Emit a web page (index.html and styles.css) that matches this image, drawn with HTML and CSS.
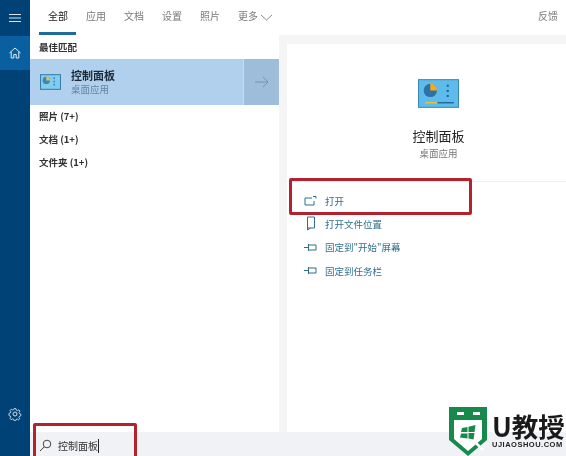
FILE: index.html
```html
<!DOCTYPE html>
<html lang="zh-CN">
<head>
  <meta charset="UTF-8" />
  <title>控制面板</title>
  <link rel="stylesheet" href="styles.css">
</head>
<body>
  <div class="screen">
    <!-- Sidebar -->
    <aside class="sidebar">
      <div class="side-btn">
        <svg width="14" height="10" viewBox="0 0 14 10"><path d="M1 1.500h12M1 5h12M1 8.500h12" stroke="#d5e3ee" fill="none"/></svg>
      </div>
      <div class="side-btn side-home">
        <svg width="14" height="14" viewBox="0 0 14 14"><path d="M1.500 7 7 2l5.500 5M3.200 5.800V12h2.600V8.500h2.400V12h2.600V5.800" stroke="#e3eef6" fill="none"/></svg>
      </div>
      <div class="side-gear">
        <svg width="14" height="14" viewBox="0 0 14 14"><path d="M6 1.200h2l.4 1.700 1.300.6 1.500-.9 1.300 1.500-1 1.400.4 1.300 1.600.6v1.800l-1.600.6-.5 1.300.9 1.300-1.400 1.300-1.400-.9-1.300.5-.4 1.400H6l-.4-1.500-1.300-.5-1.500.9-1.300-1.400.9-1.400-.5-1.200-1.600-.6V6.600l1.600-.6.5-1.300-1-1.400 1.400-1.400 1.500.9 1.300-.5z" stroke="#d5e3ee" fill="none" transform="translate(.7 .5) scale(.9)"/><circle cx="7" cy="7" r="2" stroke="#d5e3ee" fill="none"/></svg>
      </div>
    </aside>

    <main class="main">
      <!-- Tabs -->
      <nav class="tabs">
        <span class="tab tab-active">全部</span>
        <span class="tab">应用</span>
        <span class="tab">文档</span>
        <span class="tab">设置</span>
        <span class="tab">照片</span>
        <span class="tab">更多
          <svg class="chevron" width="13" height="7" viewBox="0 0 13 7"><path d="M1 1l5.500 5L12 1" stroke="#8a8a8a" fill="none"/></svg>
        </span>
        <span class="feedback">反馈</span>
      </nav>

      <div class="content">
        <!-- Results -->
        <section class="results">
          <h2 class="best">最佳匹配</h2>
          <div class="best-row">
            <div class="best-info">
              <svg width="21" height="16" viewBox="0 0 40 30">
                <rect x="1" y="1" width="38" height="28" fill="#7fcdf0" stroke="#3b7fa8" stroke-width="2"/>
                <circle cx="12" cy="12" r="7" fill="#3f86b8"/>
                <path d="M12 12V5a7 7 0 0 1 7 7z" fill="#f0c040"/>
                <path d="M26 8h2M26 14h2M26 20h2" stroke="#1d5f8e" stroke-width="3"/>
              </svg>
              <div>
                <div class="best-title">控制面板</div>
                <div class="best-sub">桌面应用</div>
              </div>
            </div>
            <div class="best-arrow">
              <svg width="14" height="12" viewBox="0 0 14 12"><path d="M0 6h13M8 1l5 5-5 5" stroke="#6f8ba6" stroke-width=".8" fill="none"/></svg>
            </div>
          </div>
          <div class="group">照片 (7+)</div>
          <div class="group">文档 (1+)</div>
          <div class="group">文件夹 (1+)</div>
        </section>

        <!-- Detail panel -->
        <section class="detail-pane">
          <div class="detail">
            <div class="detail-head">
              <svg width="41" height="29" viewBox="0 0 40 28">
                <rect x="0.500" y="0.500" width="39" height="27" fill="#5dbcec" stroke="#3d86b0"/>
                <circle cx="12" cy="11" r="6.500" fill="#2c72a8"/>
                <path d="M12 11V4a7 7 0 0 1 6.500 7z" fill="#f4ac18"/>
                <path d="M28 6.500h2M28 11.500h2M28 16.500h2" stroke="#1d5f8e" stroke-width="2"/>
                <path d="M7 23h12" stroke="#e8c040" stroke-width="1.500"/>
                <path d="M19 23h16" stroke="#1d6fa0" stroke-width="1.500"/>
              </svg>
              <div class="detail-title">控制面板</div>
              <div class="detail-sub">桌面应用</div>
            </div>
            <ul class="actions">
              <li class="action">
                <svg width="13" height="11" viewBox="0 0 13 11"><path d="M8 3H1v7h9V6M9 1.500h3v2" stroke="#2f6f8c" fill="none"/></svg>
                打开
              </li>
              <li class="action">
                <svg width="13" height="15" viewBox="0 0 13 15"><path d="M3.500 1h7v11h-7zM3.500 1v13l3-2" stroke="#2f6f8c" fill="none"/></svg>
                打开文件位置
              </li>
              <li class="action">
                <svg width="13" height="9" viewBox="0 0 13 9"><path d="M0 4.500h4M4.500 1v7M4.500 2h7.500v5H4.500" stroke="#2f6f8c" fill="none"/></svg>
                固定到"开始"屏幕
              </li>
              <li class="action">
                <svg width="13" height="9" viewBox="0 0 13 9"><path d="M0 4.500h4M4.500 1v7M4.500 2h7.500v5H4.500" stroke="#2f6f8c" fill="none"/></svg>
                固定到任务栏
              </li>
            </ul>
          </div>
        </section>
      </div>

      <!-- Search box -->
      <div class="search">
        <svg width="13" height="13" viewBox="0 0 13 13"><circle cx="8" cy="5" r="3.800" stroke="#444" fill="none"/><path d="M5.300 7.800 1 12" stroke="#444" fill="none"/></svg>
        <span class="search-text">控制面板</span><span class="caret"></span>
      </div>
    </main>

    <!-- Red highlight boxes drawn over the screenshot -->
    <div class="mark mark-open"></div>
    <div class="mark mark-search"></div>

    <!-- Watermark -->
    <div class="logo">
      <svg width="38" height="49" viewBox="0 0 38 49">
        <path d="M0 0h38v33L19 49 0 33z" fill="#178a4b"/>
        <path d="M5 13h28v19L19 44 5 32z" fill="#fff"/>
        <path d="M8 5h7v3H8zM24 5h7v3h-7z" fill="#fff"/>
        <path d="M27 36l7 7" stroke="#fff" stroke-width="2.500"/>
        <path d="M13 21l5.500-1v5h-6.500zM19.500 19.800l7-1.800-1 7h-6zM12 26.500h6.500v5l-7.500-1zM19.500 26h6l-1 6.500-5-1z" fill="#178a4b"/>
      </svg>
      <div class="logo-text">
        <div class="logo-name">U教授</div>
        <div class="logo-url">UJIAOSHOU.COM</div>
      </div>
    </div>
  </div>
</body>
</html>
```

FILE: styles.css
```css
* {
  margin: 0;
  padding: 0;
  box-sizing: border-box;
}

body {
  font-family: 'Noto Sans CJK SC', 'Liberation Sans', sans-serif;
  background: #fff;
  overflow: hidden;
}

.screen {
  position: relative;
  display: flex;
  width: 566px;
  height: 456px;
  overflow: hidden;
  filter: blur(0.4px);
}

.sidebar {
  width: 30px;
  flex-shrink: 0;
  background: #004275;
  display: flex;
  flex-direction: column;
}

.side-btn {
  height: 36px;
  display: flex;
  align-items: center;
  justify-content: center;
}

.side-home {
  height: 34px;
  background: #0a5fa0;
}

.side-gear {
  margin-top: auto;
  height: 49px;
  display: flex;
  justify-content: center;
}

.main {
  flex: 1;
  display: flex;
  flex-direction: column;
  min-width: 0;
}

.tabs {
  height: 35px;
  flex-shrink: 0;
  display: flex;
  padding-left: 9px;
  font-size: 10px;
  color: #7a7a7a;
}

.tab {
  width: 38px;
  line-height: 32px;
  padding-left: 9px;
  white-space: nowrap;
}

.tab-active {
  color: #222;
  border-bottom: 3px solid #1f6c9c;
  height: 35px;
  width: 37px;
  margin-right: 1px;
}

.chevron {
  vertical-align: -1px;
}

.feedback {
  margin-left: auto;
  margin-right: 8px;
  line-height: 32px;
}

.content {
  flex: 1;
  display: flex;
  min-height: 0;
}

.results {
  width: 249px;
  flex-shrink: 0;
  background: #fff;
}

.best {
  font-size: 9.5px;
  font-weight: 700;
  color: #333;
  height: 24px;
  line-height: 24px;
  padding-left: 9px;
}

.best-row {
  height: 46px;
  display: flex;
  background: #b0d0ee;
}

.best-info {
  flex: 1;
  display: flex;
  align-items: center;
  padding-left: 10px;
  gap: 10px;
  border-right: 1px solid #c5dcf1;
}

.best-title {
  font-size: 11px;
  font-weight: 700;
  color: #1c2a38;
  line-height: 14px;
}

.best-sub {
  font-size: 9.5px;
  color: #66849f;
  line-height: 15px;
}

.best-arrow {
  width: 35px;
  background: #9dbddb;
  display: flex;
  align-items: center;
  justify-content: center;
}

.group {
  font-size: 9.5px;
  font-weight: 700;
  color: #333;
  height: 23px;
  line-height: 22px;
  padding-left: 9px;
}

.detail-pane {
  flex: 1;
  padding: 9px 0 0 8px;
  background: #f5f5f6;
}

.detail {
  height: 100%;
  background: #fff;
}

.detail-head {
  height: 138px;
  padding: 35px 0 0 24px;
  display: flex;
  flex-direction: column;
  align-items: center;
  border-bottom: 1px solid #f0f0f0;
}

.detail-title {
  margin-top: 19px;
  font-size: 13px;
  line-height: 18px;
  color: #222;
}

.detail-sub {
  margin-top: 1px;
  font-size: 9.5px;
  line-height: 15px;
  color: #777;
}

.actions {
  list-style: none;
  padding-top: 7px;
}

.action {
  height: 23.3px;
  display: flex;
  align-items: center;
  gap: 8px;
  padding-left: 17px;
  font-size: 9.5px;
  color: #2f6f8c;
}

.search {
  height: 24px;
  flex-shrink: 0;
  background: #f1f2f6;
  display: flex;
  align-items: center;
  padding: 3px 0 0 9px;
  font-size: 10px;
  color: #333;
}

.search-text {
  margin-left: 6px;
}

.caret {
  width: 1px;
  height: 14px;
  background: #222;
}

.mark {
  position: absolute;
  border: 3px solid #b3222f;
  border-radius: 2px;
}

.mark-open {
  left: 289px;
  top: 178px;
  width: 183px;
  height: 37px;
}

.mark-search {
  left: 33px;
  top: 423px;
  width: 104px;
  height: 40px;
}

.logo {
  position: absolute;
  left: 449px;
  top: 407px;
  display: flex;
  gap: 5px;
}

.logo-text {
  display: flex;
  flex-direction: column;
  padding-top: 3px;
}

.logo-name {
  font-size: 26.5px;
  font-weight: 700;
  line-height: 31px;
  color: #1a1a1a;
}

.logo-url {
  font-family: 'Liberation Sans', sans-serif;
  font-size: 7.5px;
  font-weight: 700;
  line-height: 8px;
  letter-spacing: 0.5px;
  white-space: nowrap;
  color: #222;
}
```
